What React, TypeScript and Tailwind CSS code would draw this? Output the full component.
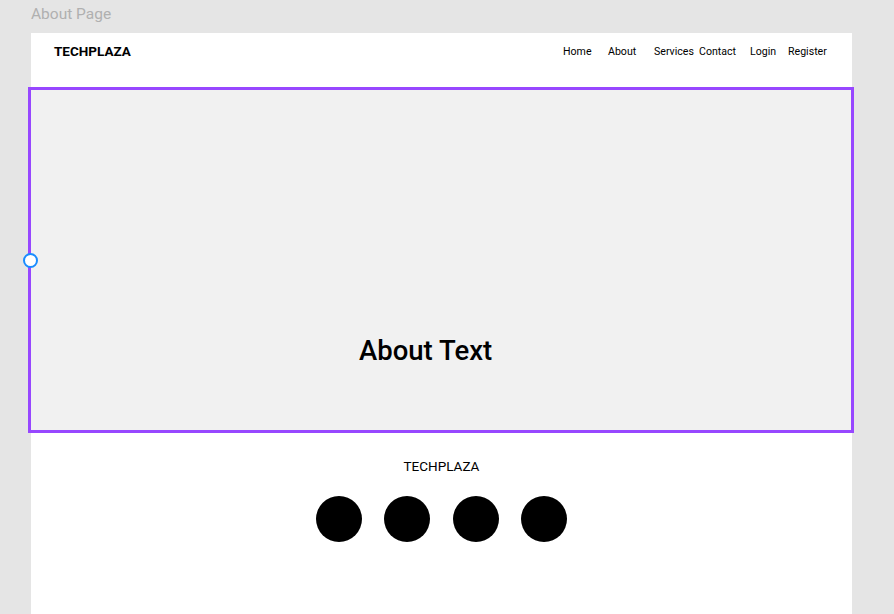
import React from 'react';

const navItems: { label: string; w: string }[] = [
  { label: 'Home', w: 'w-[45px]' },
  { label: 'About', w: 'w-[46px]' },
  { label: 'Services', w: 'w-[45px]' },
  { label: 'Contact', w: 'w-[51px]' },
  { label: 'Login', w: 'w-[38px]' },
  { label: 'Register', w: 'w-[50px]' },
];

const App: React.FC = () => {
  return (
    <div className="relative w-[894px] h-[614px] overflow-hidden bg-[#e5e5e5] font-['Roboto',sans-serif]">
      {/* Frame label */}
      <div className="h-[33px] pl-[31px] text-[15.5px] leading-[28px] text-[#b0b0b0]">About Page</div>

      {/* Page frame */}
      <div className="ml-[31px] w-[821px] h-[581px] bg-white">
        {/* Navbar */}
        <div className="flex h-[54px] items-start">
          <div className="flex w-[532px] h-[37px] items-center pl-[23px] text-[13.5px] font-bold text-black">TECHPLAZA</div>
          <div className="flex h-[38px] items-center text-[10.6px] text-black">
            {navItems.map(item => (
              <span key={item.label} className={`${item.w} whitespace-nowrap`}>{item.label}</span>
            ))}
          </div>
        </div>

        {/* Hero (selected) */}
        <div className="-ml-[3px] w-[826px] h-[346px] border-[3px] border-[#9747ff] bg-[#f1f1f1] pt-[246px] pl-[328px]">
          <h1 className="text-[27.5px] leading-[30px] font-medium text-black">About Text</h1>
        </div>

        {/* Footer */}
        <div className="flex flex-col items-center pt-[25px]">
          <div className="text-[13.5px] leading-[16px] text-black">TECHPLAZA</div>
          <div className="mt-[22px] flex gap-[22.5px]">
            {[0, 1, 2, 3].map(i => (
              <div key={i} className="w-[46px] h-[46px] rounded-full bg-black" />
            ))}
          </div>
        </div>
      </div>

      {/* Selection handle */}
      <div className="absolute left-[23px] top-[253px] w-[15px] h-[15px] rounded-full border-[2.5px] border-[#1a8cff] bg-white" />
    </div>
  );
};

export default App;
